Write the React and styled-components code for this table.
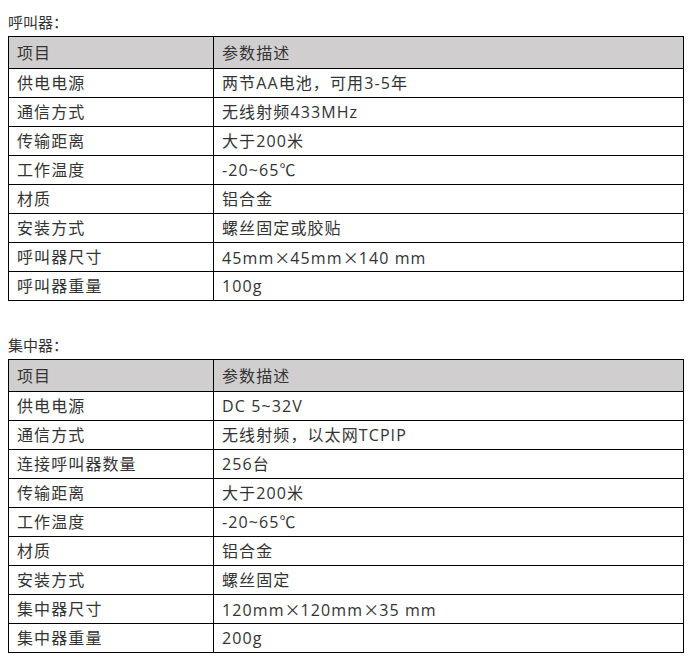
import React from "react";
import styled, { createGlobalStyle } from "styled-components";

const GlobalStyle = createGlobalStyle`
  body {
    margin: 8px;
    background: #fff;
    color: #333;
    font-family: "Open Sans", "Noto Sans CJK SC", sans-serif;
  }
`;

const Title = styled.p`
  margin: 0;
  height: 28px;
  line-height: 28px;
  font-size: 15px;
  font-family: "Noto Sans CJK SC", sans-serif;
  color: #333;
`;

const Spacer = styled.div`
  height: 30px;
`;

const Table = styled.table`
  width: 676px;
  border-collapse: collapse;
  table-layout: fixed;
  font-size: 16px;
  letter-spacing: 1.1px;
  color: #333;
`;

const Row = styled.tr`
  height: ${({ head }) => (head ? "32px" : "29px")};
  background: ${({ head }) => (head ? "#d0cece" : "#fff")};
`;

const Cell = styled.td`
  border: 1px solid #000;
  padding: 0 8px;
  line-height: 20px;
  vertical-align: middle;
  white-space: nowrap;
  width: ${({ first }) => (first ? "188px" : "auto")};
`;

const Cross = styled.span`
  font-family: "Noto Sans CJK SC", sans-serif;
  letter-spacing: 0;
`;

const withCross = (text) =>
  text.split("×").map((part, i, arr) => (
    <React.Fragment key={i}>
      {part}
      {i < arr.length - 1 && <Cross>×</Cross>}
    </React.Fragment>
  ));

const caller = [
  ["供电电源", "两节AA电池，可用3-5年"],
  ["通信方式", "无线射频433MHz"],
  ["传输距离", "大于200米"],
  ["工作温度", "-20~65℃"],
  ["材质", "铝合金"],
  ["安装方式", "螺丝固定或胶贴"],
  ["呼叫器尺寸", "45mm×45mm×140 mm"],
  ["呼叫器重量", "100g"],
];

const hub = [
  ["供电电源", "DC 5~32V"],
  ["通信方式", "无线射频，以太网TCPIP"],
  ["连接呼叫器数量", "256台"],
  ["传输距离", "大于200米"],
  ["工作温度", "-20~65℃"],
  ["材质", "铝合金"],
  ["安装方式", "螺丝固定"],
  ["集中器尺寸", "120mm×120mm×35 mm"],
  ["集中器重量", "200g"],
];

const SpecTable = ({ rows }) => (
  <Table>
    <tbody>
      <Row head>
        <Cell first>项目</Cell>
        <Cell>参数描述</Cell>
      </Row>
      {rows.map(([k, v]) => (
        <Row key={k}>
          <Cell first>{k}</Cell>
          <Cell>{withCross(v)}</Cell>
        </Row>
      ))}
    </tbody>
  </Table>
);

export default function App() {
  return (
    <>
      <GlobalStyle />
      <Title>呼叫器：</Title>
      <SpecTable rows={caller} />
      <Spacer />
      <Title>集中器：</Title>
      <SpecTable rows={hub} />
    </>
  );
}
